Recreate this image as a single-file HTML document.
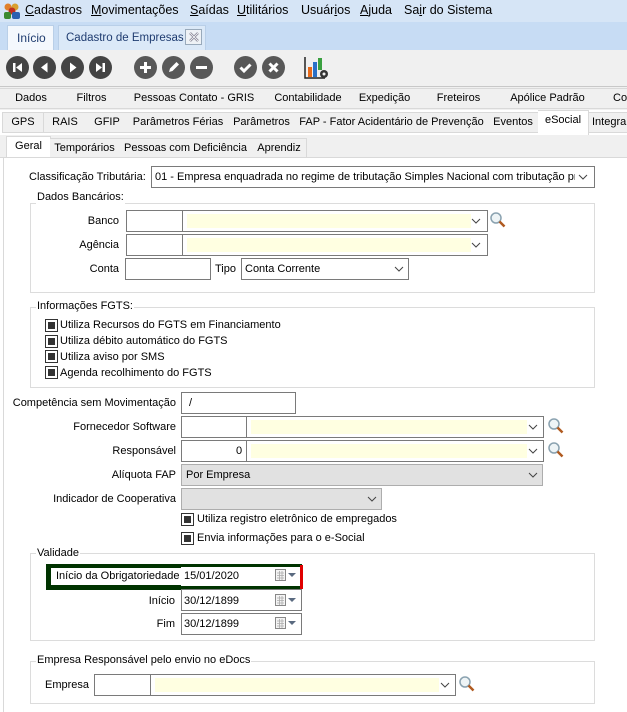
<!DOCTYPE html>
<html><head><meta charset="utf-8">
<style>
*{box-sizing:border-box;margin:0;padding:0}
body{width:627px;height:712px;overflow:hidden;background:#fff;font-family:"Liberation Sans",sans-serif;font-size:11px;color:#000;position:relative}
.a{position:absolute}
.t{position:absolute;white-space:nowrap;line-height:14px}
.r{text-align:right}
.box{position:absolute;border:1px solid #7a7a7a;background:#fff}
.yel{position:absolute;border:1px solid #7a7a7a;background:#fff}
.yel i{position:absolute;left:4px;top:3px;bottom:3px;right:16px;background:#ffffe1}
.fs{position:absolute;border:1px solid #dcdcdc}
.lg{position:absolute;background:#fff;padding:0 1px;line-height:14px;white-space:nowrap}
.cb{position:absolute;width:13px;height:13px;border:1px solid #333;background:#fff}
.cb:after{content:"";position:absolute;left:2px;top:2px;width:7px;height:7px;background:#333}
.tab{position:absolute;height:21px;border:1px solid #d9d9d9;border-left:none;background:#f0f0f0;text-align:center;line-height:19px;white-space:nowrap;overflow:hidden}
.c{position:absolute;width:23px;height:23px;border-radius:50%;background:#505050}
.c svg{position:absolute;left:0;top:0}
</style></head><body>
<div class="a" style="left:0;top:0;width:627px;height:22px;background:#d6e5f6"></div>
<svg class="a" style="left:3px;top:2px" width="18" height="18" viewBox="0 0 18 18"><circle cx="5" cy="5" r="3.5" fill="#e0802a"/><circle cx="12" cy="5" r="3.5" fill="#d8a030"/><circle cx="9" cy="9" r="3.5" fill="#c03020"/><rect x="1" y="10" width="7" height="7" rx="2" fill="#3a8a30"/><rect x="9" y="10" width="8" height="7" rx="2" fill="#2a60b0"/></svg>
<div class="t" style="left:25px;top:3px;font-size:12.5px"><u>C</u>adastros</div>
<div class="t" style="left:91px;top:3px;font-size:12.5px"><u>M</u>ovimentações</div>
<div class="t" style="left:190px;top:3px;font-size:12.5px"><u>S</u>aídas</div>
<div class="t" style="left:237px;top:3px;font-size:12.5px"><u>U</u>tilitários</div>
<div class="t" style="left:301px;top:3px;font-size:12.5px">Usuár<u>i</u>os</div>
<div class="t" style="left:360px;top:3px;font-size:12.5px"><u>A</u>juda</div>
<div class="t" style="left:404px;top:3px;font-size:12.5px">Sa<u>i</u>r do Sistema</div>
<div class="a" style="left:0;top:22px;width:627px;height:28px;background:#c7dcf4"></div>
<div class="a" style="left:7px;top:25px;width:47px;height:25px;background:#f4f8fd;border:1px solid #b9cfe8;border-bottom:none"></div>
<div class="t" style="left:17px;top:31px;color:#1f3c70;font-size:12px">Início</div>
<div class="a" style="left:58px;top:25px;width:148px;height:25px;background:#dbe9f8;border:1px solid #b9cfe8;border-bottom:none"></div>
<div class="t" style="left:66px;top:31px;color:#1f3c70;font-size:11.5px">Cadastro de Empresas</div>
<div class="a" style="left:185px;top:29px;width:17px;height:16px;border:1px solid #9ab;background:#eef2f6"></div>
<svg class="a" style="left:189px;top:32px" width="10" height="10"><path d="M1 1L9 9M9 1L1 9" stroke="#889" stroke-width="2.4"/><path d="M1 1L9 9M9 1L1 9" stroke="#fff" stroke-width="0.8"/></svg>
<div class="a" style="left:0;top:50px;width:627px;height:37px;background:#f0f0f0;border-bottom:1px solid #c8c8c8"></div>
<div class="c" style="left:6px;top:56px;background:#444"><svg width="23" height="23"><rect x="7" y="7" width="2.5" height="9" fill="#fff"/><path d="M16 7L10 11.5L16 16Z" fill="#fff"/></svg></div>
<div class="c" style="left:33px;top:56px;background:#444"><svg width="23" height="23"><path d="M14.5 6.5L8 11.5L14.5 16.5Z" fill="#fff"/></svg></div>
<div class="c" style="left:61px;top:56px;background:#444"><svg width="23" height="23"><path d="M9 6.5L15.5 11.5L9 16.5Z" fill="#fff"/></svg></div>
<div class="c" style="left:89px;top:56px;background:#444"><svg width="23" height="23"><path d="M7 7L13 11.5L7 16Z" fill="#fff"/><rect x="13.5" y="7" width="2.5" height="9" fill="#fff"/></svg></div>
<div class="c" style="left:134px;top:56px;background:#585858"><svg width="23" height="23"><path d="M11.5 6v11M6 11.5h11" stroke="#fff" stroke-width="3"/></svg></div>
<div class="c" style="left:162px;top:56px;background:#585858"><svg width="23" height="23"><path d="M7 16l1-3.5 6.5-6.5 2.5 2.5-6.5 6.5z" fill="#fff"/></svg></div>
<div class="c" style="left:190px;top:56px;background:#585858"><svg width="23" height="23"><path d="M6 11.5h11" stroke="#fff" stroke-width="3"/></svg></div>
<div class="c" style="left:234px;top:56px;background:#585858"><svg width="23" height="23"><path d="M6.5 11.5l3.5 3.5 6.5-6.5" stroke="#fff" stroke-width="3" fill="none"/></svg></div>
<div class="c" style="left:262px;top:56px;background:#585858"><svg width="23" height="23"><path d="M7.5 7.5l8 8M15.5 7.5l-8 8" stroke="#fff" stroke-width="3"/></svg></div>
<svg class="a" style="left:304px;top:56px" width="26" height="24"><path d="M1 1v21h20" stroke="#222" stroke-width="1.5" fill="none"/><rect x="4" y="11" width="4" height="10" fill="#e86a1a"/><rect x="9" y="6" width="4" height="15" fill="#2a70c8"/><rect x="14" y="2" width="4" height="12" fill="#3aa040"/><circle cx="20" cy="18" r="4" fill="#333"/><circle cx="20" cy="18" r="1.5" fill="#f0f0f0"/></svg>
<div class="a" style="left:0;top:87px;width:627px;height:24px;background:#f0f0f0"></div>
<div class="tab" style="left:0;top:88px;width:63px">Dados</div>
<div class="tab" style="left:62px;top:88px;width:60px">Filtros</div>
<div class="tab" style="left:121px;top:88px;width:147px">Pessoas Contato - GRIS</div>
<div class="tab" style="left:267px;top:88px;width:83px">Contabilidade</div>
<div class="tab" style="left:349px;top:88px;width:72px">Expedição</div>
<div class="tab" style="left:420px;top:88px;width:78px">Freteiros</div>
<div class="tab" style="left:497px;top:88px;width:102px">Apólice Padrão</div>
<div class="tab" style="left:598px;top:88px;width:40px;text-align:left;padding-left:15px">Co</div>
<div class="a" style="left:0;top:110px;width:627px;height:26px;background:#fff"></div>
<div class="tab" style="left:2px;top:112px;width:42px;border-left:1px solid #d9d9d9">GPS</div>
<div class="tab" style="left:44px;top:112px;width:43px">RAIS</div>
<div class="tab" style="left:86px;top:112px;width:43px">GFIP</div>
<div class="tab" style="left:128px;top:112px;width:101px">Parâmetros Férias</div>
<div class="tab" style="left:228px;top:112px;width:68px">Parâmetros</div>
<div class="tab" style="left:295px;top:112px;width:194px">FAP - Fator Acidentário de Prevenção</div>
<div class="tab" style="left:488px;top:112px;width:51px">Eventos</div>
<div class="tab" style="left:538px;top:110px;width:51px;height:25px;background:#fff;border-top:1px solid #d9d9d9;border-bottom:none;line-height:19px">eSocial</div>
<div class="tab" style="left:589px;top:112px;width:50px;text-align:left;padding-left:3px">Integra</div>
<div class="a" style="left:0;top:135px;width:627px;height:23px;background:#f0f0f0"></div>
<div class="tab" style="left:6px;top:136px;width:45px;height:22px;background:#fff;border:1px solid #d9d9d9;border-bottom:none">Geral</div>
<div class="tab" style="left:50px;top:138px;width:70px;height:20px;line-height:18px">Temporários</div>
<div class="tab" style="left:119px;top:138px;width:134px;height:20px;line-height:18px">Pessoas com Deficiência</div>
<div class="tab" style="left:252px;top:138px;width:55px;height:20px;line-height:18px">Aprendiz</div>
<div class="a" style="left:0;top:157px;width:627px;height:1px;background:#d9d9d9"></div>
<div class="a" style="left:3px;top:158px;width:1px;height:554px;background:#d9d9d9"></div>

<div class="t" style="left:29px;top:170px">Classificação Tributária:</div>
<div class="box" style="left:151px;top:166px;width:444px;height:22px"></div>
<div class="t" style="left:155px;top:170px;width:420px;overflow:hidden">01 - Empresa enquadrada no regime de tributação Simples Nacional com tributação prev</div>
<svg class="a" style="left:578px;top:173px" width="10" height="8"><path d="M1 2l4 4 4-4" stroke="#444" fill="none"/></svg>

<div class="fs" style="left:30px;top:203px;width:565px;height:90px"></div>
<div class="lg" style="left:36px;top:190px">Dados Bancários:</div>
<div class="t r" style="left:40px;top:214px;width:79px">Banco</div>
<div class="box" style="left:126px;top:210px;width:58px;height:22px"></div>
<div class="yel" style="left:182px;top:210px;width:306px;height:22px"><i></i></div>
<svg class="a" style="left:471px;top:217px" width="10" height="8"><path d="M1 2l4 4 4-4" stroke="#444" fill="none"/></svg>
<svg class="a" style="left:489px;top:211px" width="18" height="18"><circle cx="7" cy="7" r="5" fill="#eef4f6" stroke="#8aa2b0" stroke-width="1.5"/><path d="M10.5 10.5l5 5" stroke="#b05a20" stroke-width="2.5"/></svg>
<div class="t r" style="left:40px;top:238px;width:79px">Agência</div>
<div class="box" style="left:126px;top:234px;width:58px;height:22px"></div>
<div class="yel" style="left:182px;top:234px;width:306px;height:22px"><i></i></div>
<svg class="a" style="left:471px;top:241px" width="10" height="8"><path d="M1 2l4 4 4-4" stroke="#444" fill="none"/></svg>
<div class="t r" style="left:40px;top:262px;width:79px">Conta</div>
<div class="box" style="left:125px;top:258px;width:86px;height:22px"></div>
<div class="t" style="left:215px;top:262px">Tipo</div>
<div class="box" style="left:241px;top:258px;width:168px;height:22px"></div>
<div class="t" style="left:245px;top:262px">Conta Corrente</div>
<svg class="a" style="left:394px;top:265px" width="10" height="8"><path d="M1 2l4 4 4-4" stroke="#444" fill="none"/></svg>

<div class="fs" style="left:30px;top:307px;width:565px;height:81px"></div>
<div class="lg" style="left:36px;top:299px">Informações FGTS:</div>
<div class="cb" style="left:45px;top:319px"></div><div class="t" style="left:60px;top:318px">Utiliza Recursos do FGTS em Financiamento</div>
<div class="cb" style="left:45px;top:335px"></div><div class="t" style="left:60px;top:334px">Utiliza débito automático do FGTS</div>
<div class="cb" style="left:45px;top:350px"></div><div class="t" style="left:60px;top:350px">Utiliza aviso por SMS</div>
<div class="cb" style="left:45px;top:366px"></div><div class="t" style="left:60px;top:366px">Agenda recolhimento do FGTS</div>

<div class="t r" style="left:0;top:396px;width:176px">Competência sem Movimentação</div>
<div class="box" style="left:181px;top:392px;width:115px;height:22px"></div>
<div class="t" style="left:189px;top:396px">/</div>
<div class="t r" style="left:0;top:420px;width:176px">Fornecedor Software</div>
<div class="box" style="left:181px;top:416px;width:67px;height:22px"></div>
<div class="yel" style="left:246px;top:416px;width:298px;height:22px"><i></i></div>
<svg class="a" style="left:528px;top:423px" width="10" height="8"><path d="M1 2l4 4 4-4" stroke="#444" fill="none"/></svg>
<svg class="a" style="left:547px;top:417px" width="18" height="18"><circle cx="7" cy="7" r="5" fill="#eef4f6" stroke="#8aa2b0" stroke-width="1.5"/><path d="M10.5 10.5l5 5" stroke="#b05a20" stroke-width="2.5"/></svg>
<div class="t r" style="left:0;top:444px;width:176px">Responsável</div>
<div class="box" style="left:181px;top:440px;width:67px;height:22px"></div>
<div class="t" style="left:236px;top:444px">0</div>
<div class="yel" style="left:246px;top:440px;width:298px;height:22px"><i></i></div>
<svg class="a" style="left:528px;top:447px" width="10" height="8"><path d="M1 2l4 4 4-4" stroke="#444" fill="none"/></svg>
<svg class="a" style="left:547px;top:441px" width="18" height="18"><circle cx="7" cy="7" r="5" fill="#eef4f6" stroke="#8aa2b0" stroke-width="1.5"/><path d="M10.5 10.5l5 5" stroke="#b05a20" stroke-width="2.5"/></svg>
<div class="t r" style="left:0;top:468px;width:176px">Alíquota FAP</div>
<div class="box" style="left:181px;top:464px;width:362px;height:22px;background:#e1e1e1;border-color:#adadad"></div>
<div class="t" style="left:186px;top:468px">Por Empresa</div>
<svg class="a" style="left:528px;top:471px" width="10" height="8"><path d="M1 2l4 4 4-4" stroke="#444" fill="none"/></svg>
<div class="t r" style="left:0;top:492px;width:176px">Indicador de Cooperativa</div>
<div class="box" style="left:181px;top:488px;width:201px;height:22px;background:#e1e1e1;border-color:#adadad"></div>
<svg class="a" style="left:367px;top:495px" width="10" height="8"><path d="M1 2l4 4 4-4" stroke="#444" fill="none"/></svg>
<div class="cb" style="left:181px;top:513px"></div><div class="t" style="left:197px;top:512px">Utiliza registro eletrônico de empregados</div>
<div class="cb" style="left:181px;top:532px"></div><div class="t" style="left:197px;top:531px">Envia informações para o e-Social</div>

<div class="fs" style="left:30px;top:553px;width:565px;height:88px"></div>
<div class="lg" style="left:36px;top:546px">Validade</div>
<div class="a" style="left:46px;top:564px;width:256px;height:26px;background:#003300"></div>
<div class="a" style="left:51px;top:568px;width:131px;height:17px;background:#fff"></div>
<div class="t" style="left:56px;top:569px">Início da Obrigatoriedade</div>
<div class="a" style="left:181px;top:567px;width:119px;height:19px;background:#fff"></div>
<div class="a" style="left:300px;top:565px;width:3px;height:24px;background:#e00000"></div>
<div class="t" style="left:184px;top:569px">15/01/2020</div>
<div class="t r" style="left:40px;top:594px;width:135px">Início</div>
<div class="box" style="left:181px;top:589px;width:121px;height:22px"></div>
<div class="t" style="left:184px;top:594px">30/12/1899</div>
<div class="t r" style="left:40px;top:617px;width:135px">Fim</div>
<div class="box" style="left:181px;top:613px;width:121px;height:22px"></div>
<div class="t" style="left:184px;top:617px">30/12/1899</div>
<svg class="a" style="left:275px;top:569px" width="24" height="14"><rect x="0.5" y="0.5" width="10" height="11" fill="#f4f4f4" stroke="#888"/><path d="M2 4h7M2 6.5h7M2 9h7M4.5 2v9M7 2v9" stroke="#aaa" stroke-width="0.8"/><path d="M13 4h8l-4 4z" fill="#5a6a80"/></svg>
<svg class="a" style="left:275px;top:594px" width="24" height="14"><rect x="0.5" y="0.5" width="10" height="11" fill="#f4f4f4" stroke="#888"/><path d="M2 4h7M2 6.5h7M2 9h7M4.5 2v9M7 2v9" stroke="#aaa" stroke-width="0.8"/><path d="M13 4h8l-4 4z" fill="#5a6a80"/></svg>
<svg class="a" style="left:275px;top:617px" width="24" height="14"><rect x="0.5" y="0.5" width="10" height="11" fill="#f4f4f4" stroke="#888"/><path d="M2 4h7M2 6.5h7M2 9h7M4.5 2v9M7 2v9" stroke="#aaa" stroke-width="0.8"/><path d="M13 4h8l-4 4z" fill="#5a6a80"/></svg>

<div class="fs" style="left:30px;top:661px;width:565px;height:43px"></div>
<div class="lg" style="left:36px;top:653px">Empresa Responsável pelo envio no eDocs</div>
<div class="t" style="left:45px;top:678px">Empresa</div>
<div class="box" style="left:94px;top:674px;width:58px;height:22px"></div>
<div class="yel" style="left:150px;top:674px;width:306px;height:22px"><i></i></div>
<svg class="a" style="left:440px;top:681px" width="10" height="8"><path d="M1 2l4 4 4-4" stroke="#444" fill="none"/></svg>
<svg class="a" style="left:458px;top:675px" width="18" height="18"><circle cx="7" cy="7" r="5" fill="#eef4f6" stroke="#8aa2b0" stroke-width="1.5"/><path d="M10.5 10.5l5 5" stroke="#b05a20" stroke-width="2.5"/></svg>
</body></html>
